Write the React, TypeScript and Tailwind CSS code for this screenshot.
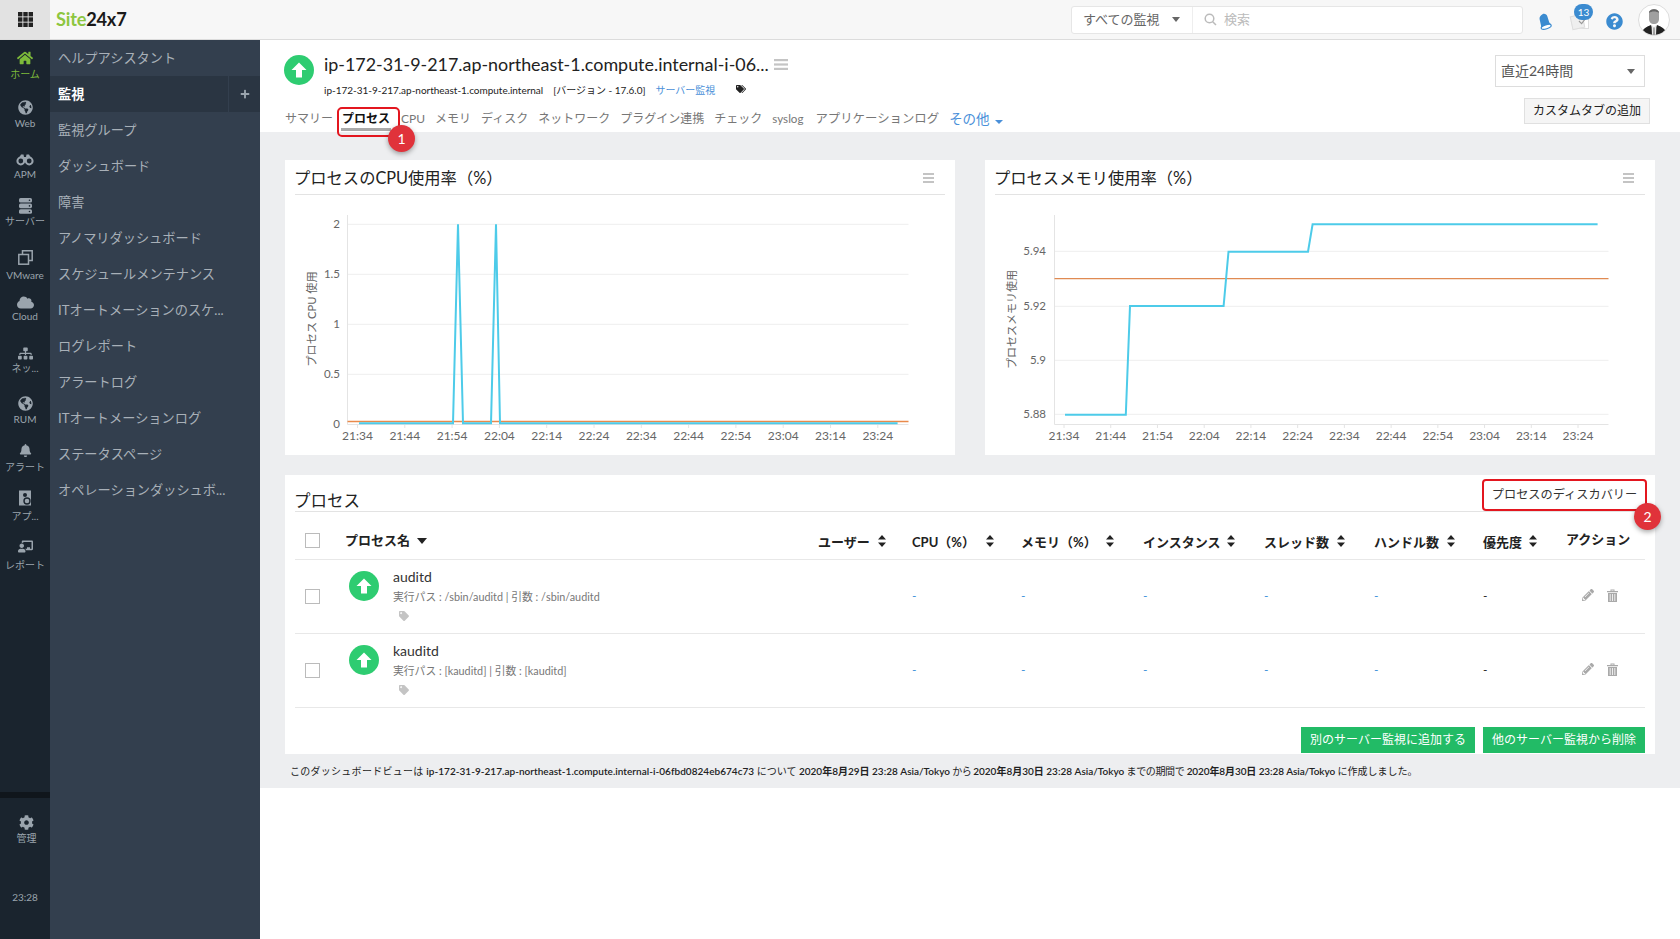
import React from "react";
import {
  FaHome, FaGlobeAmericas, FaCloud, FaSitemap, FaBell, FaCog, FaTags, FaTag, FaPencilAlt, FaChalkboardTeacher, FaQuestionCircle, FaPlus,
} from "react-icons/fa";

const menu = [
  "監視グループ", "ダッシュボード", "障害", "アノマリダッシュボード", "スケジュールメンテナンス", "ITオートメーションのスケ...",
  "ログレポート", "アラートログ", "ITオートメーションログ", "ステータスページ", "オペレーションダッシュボ...",
];

function AppIcon() {
  return (
    <svg width="14" height="16" viewBox="0 0 14 16">
      <rect x="1" y="0.5" width="12" height="15" fill="#9aa4ad" />
      <circle cx="7" cy="5" r="2" fill="#1a242e" />
      <circle cx="9" cy="11" r="3" fill="none" stroke="#1a242e" strokeWidth="1.4" />
    </svg>
  );
}

function Binoc() {
  return (
    <svg width="18" height="13" viewBox="0 0 18 13">
      <path d="M3 5 5 1.5H7.5L8 4H10L10.5 1.5H13L15 5Z" fill="currentColor" />
      <circle cx="4.8" cy="8" r="3.4" fill="none" stroke="currentColor" strokeWidth="2" />
      <circle cx="13.2" cy="8" r="3.4" fill="none" stroke="currentColor" strokeWidth="2" />
      <rect x="7.8" y="5" width="2.4" height="3" fill="currentColor" />
    </svg>
  );
}

function Drums() {
  return (
    <svg width="13" height="16" viewBox="0 0 13 16" fill="currentColor">
      {[0, 5.6, 11.2].map((y) => (
        <g key={y}>
          <rect x="0" y={y} width="13" height="4.6" rx="1.6" />
          <circle cx="10.5" cy={y + 2.3} r="0.8" fill="#1a242e" />
        </g>
      ))}
    </svg>
  );
}

function Squares() {
  return (
    <svg width="15" height="15" viewBox="0 0 15 15" fill="none" stroke="currentColor" strokeWidth="1.5">
      <path d="M4.5 4V.8H14.2V10.5H11" />
      <rect x="0.8" y="4.5" width="9.7" height="9.7" />
    </svg>
  );
}

const rail = [
  { label: "Web", h: "h-[52px]", l: "", icon: <FaGlobeAmericas size={15} /> },
  { label: "APM", h: "h-[47px]", l: "-mt-[1px]", icon: <Binoc /> },
  { label: "サーバー", h: "h-[51px]", l: "-mt-[1px]", icon: <Drums /> },
  { label: "VMware", h: "h-[45px]", l: "mt-[2px]", icon: <Squares /> },
  { label: "Cloud", h: "h-[51px]", l: "-mt-[2px]", icon: <FaCloud size={17} /> },
  { label: "ネッ...", h: "h-[50px]", l: "-mt-[1px]", icon: <FaSitemap size={15} /> },
  { label: "RUM", h: "h-[47px]", l: "", icon: <FaGlobeAmericas size={15} /> },
  { label: "アラート", h: "h-[48px]", l: "mt-[1px]", icon: <FaBell size={13} /> },
  { label: "アプ...", h: "h-[48px]", l: "mt-[2px]", icon: <AppIcon /> },
  { label: "レポート", h: "h-[48px]", l: "mt-[3px]", icon: <FaChalkboardTeacher size={15} /> },
];

function StatusUp() {
  return (
    <svg width="30" height="30" viewBox="0 0 30 30" className="shrink-0">
      <circle cx="15" cy="15" r="15" fill="#2ecc71" />
      <path d="M7.5 15 15 7.5 22.5 15H18V22.5H12V15Z" fill="#fff" />
    </svg>
  );
}

function Burger({ w = 11, h = 10 }: { w?: number; h?: number }) {
  return (
    <svg width={w} height={h} viewBox="0 0 11 10" preserveAspectRatio="none">
      <rect width="11" height="2" fill="#c4c4c4" />
      <rect y="4" width="11" height="2" fill="#c4c4c4" />
      <rect y="8" width="11" height="2" fill="#c4c4c4" />
    </svg>
  );
}

function Sort() {
  return (
    <svg width="8" height="12" viewBox="0 0 8 12" className="shrink-0">
      <path d="M4 0 8 4.5H0ZM0 7.5H8L4 12Z" fill="#222" />
    </svg>
  );
}

function Trash() {
  return (
    <svg width="11" height="13" viewBox="0 0 11 13">
      <path d="M0 2H11V3.2H0ZM3.5 2V.6H7.5V2H6.6V1.4H4.4V2ZM1 4H10V13H1Z" fill="#a9a9a9" />
      <path d="M3.2 5V12M5.5 5V12M7.8 5V12" stroke="#fff" strokeWidth="0.8" />
    </svg>
  );
}

function Annot({ n, className }: { n: string; className: string }) {
  return (
    <span className={"absolute flex h-[27px] w-[27px] items-center justify-center rounded-full bg-[#e0323a] text-[14px] font-normal leading-none text-white shadow-[0_2px_5px_rgba(0,0,0,0.35)] " + className}>
      {n}
    </span>
  );
}

const axis = "'Lato','Noto Sans CJK JP',sans-serif";
const times = ["21:34", "21:44", "21:54", "22:04", "22:14", "22:24", "22:34", "22:44", "22:54", "23:04", "23:14", "23:24"];

function Chart1() {
  const ys: [string, number][] = [["2", 224.3], ["1.5", 274.3], ["1", 324.3], ["0.5", 374.3], ["0", 424]];
  return (
    <svg viewBox="285 195 670 260" className="block h-[260px] w-[670px]" fontFamily={axis}>
      {ys.slice(0, 4).map(([, y]) => <line key={y} x1="347.5" x2="908.5" y1={y} y2={y} stroke="#eeeeee" />)}
      <path d="M347.5 215V424.5H908.5" fill="none" stroke="#e4e4e4" />
      {ys.map(([t, y]) => <text key={t} x="340" y={t === "0" ? 428 : y + 4} textAnchor="end" fontSize="11.5" fill="#666">{t}</text>)}
      {times.map((t, i) => {
        const x = 357.5 + i * 47.3;
        return (
          <g key={t}>
            <line x1={x} x2={x} y1="424" y2="428" stroke="#e4e4e4" />
            <text x={x} y="440" textAnchor="middle" fontSize="12" fill="#666">{t}</text>
          </g>
        );
      })}
      <text transform="translate(316 319) rotate(-90)" textAnchor="middle" fontSize="11.2" fill="#666">プロセス CPU 使用</text>
      <line x1="347.5" x2="908.5" y1="421.5" y2="421.5" stroke="#e98a4b" strokeWidth="1.5" />
      <path d="M359 423.3H453L458 224.3L463 423.3H491L496 224.3L500 423.3H897.6" fill="none" stroke="#4dcbe9" strokeWidth="2" />
    </svg>
  );
}

function Chart2() {
  const ys: [string, number][] = [["5.94", 251.3], ["5.92", 306.3], ["5.9", 360.3], ["5.88", 414.3]];
  return (
    <svg viewBox="985 195 670 260" className="block h-[260px] w-[670px]" fontFamily={axis}>
      {ys.map(([, y]) => <line key={y} x1="1054.5" x2="1608.5" y1={y} y2={y} stroke="#eeeeee" />)}
      <path d="M1054.5 215V424.5H1608.5" fill="none" stroke="#e4e4e4" />
      {ys.map(([t, y]) => <text key={t} x="1046" y={y + 4} textAnchor="end" fontSize="11.5" fill="#666">{t}</text>)}
      {times.map((t, i) => {
        const x = 1064 + i * 46.73;
        return (
          <g key={t}>
            <line x1={x} x2={x} y1="424" y2="428" stroke="#e4e4e4" />
            <text x={x} y="440" textAnchor="middle" fontSize="12" fill="#666">{t}</text>
          </g>
        );
      })}
      <text transform="translate(1016 319.5) rotate(-90)" textAnchor="middle" fontSize="11" fill="#666">プロセスメモリ使用</text>
      <line x1="1054.5" x2="1608.5" y1="278.7" y2="278.7" stroke="#e08a52" strokeWidth="1.2" />
      <path d="M1065 414.7H1125.8L1130 306H1223.6L1228.5 251.7H1308L1312.6 224.3H1597.6" fill="none" stroke="#4dcbe9" strokeWidth="2" />
    </svg>
  );
}

function ChartCard({ title, children }: { title: string; children: React.ReactNode }) {
  return (
    <div className="h-[295px] w-[670px] bg-white">
      <div className="mx-[10px] flex h-[35px] items-center justify-between border-b border-[#e3e3e3] pt-[2px]">
        <span className="-ml-[1px] text-[16.3px] leading-[22px] text-[#222]">{title}</span>
        <span className="mr-[11px] flex"><Burger /></span>
      </div>
      {children}
    </div>
  );
}

const gridCols = "grid grid-cols-[50px_473px_94px_109px_122px_121px_110px_109px_83px_79px]";
const heads = ["ユーザー", "CPU（%）", "メモリ（%）", "インスタンス", "スレッド数", "ハンドル数", "優先度"];
const sortMl = ["ml-[8px]", "ml-[11px]", "ml-[9px]", "ml-[7px]", "ml-[8px]", "ml-[8px]", "ml-[7px]"];

function Row({ name, path }: { name: string; path: string }) {
  return (
    <div className={gridCols + " h-[74px] border-b border-[#e8e8e8]"}>
      <div className="flex items-center pl-[10px]"><span className="h-[15px] w-[15px] border border-[#bbb] bg-white" /></div>
      <div className="flex gap-[14px] pl-[4px] pt-[11px]">
        <StatusUp />
        <div className="flex flex-col">
          <span className="-mt-[3px] text-[14px] leading-[18px] text-[#333]">{name}</span>
          <span className="mt-[2px] text-[10.8px] leading-[18px] text-[#777]">{path}</span>
          <span className="mt-[5px] pl-[6px] text-[#c4c4c4]"><FaTag size={10} /></span>
        </div>
      </div>
      <div />
      {[0, 1, 2, 3, 4].map((i) => (
        <div key={i} className="flex items-center pb-[2px] text-[12px] text-[#3b8fd9]">-</div>
      ))}
      <div className="flex items-center pb-[2px] text-[12px] text-[#222]">-</div>
      <div className="flex items-center gap-[13px] pb-[3px] pl-[16px] text-[#a9a9a9]">
        <FaPencilAlt size={12} />
        <Trash />
      </div>
    </div>
  );
}

export default function App() {
  return (
    <div className="flex h-[939px] w-[1680px] flex-col overflow-hidden bg-white font-['Lato','Noto_Sans_CJK_JP',sans-serif]">
      <header className="flex h-[40px] shrink-0 items-stretch border-b border-[#dcdcdc] bg-[#f7f7f7]">
        <div className="flex w-[50px] items-center justify-center bg-[#e2e2e2]">
          <svg width="15" height="15" viewBox="0 0 15 15" fill="#222">
            {[0, 5.3, 10.6].map((y) => [0, 5.3, 10.6].map((x) => <rect key={x + "-" + y} x={x} y={y} width="4.4" height="4.4" />))}
          </svg>
        </div>
        <div className="ml-[6px] flex items-center text-[18.2px] font-bold tracking-[-0.2px]">
          <span className="text-[#8dc63f]">Site</span>
          <span className="text-[#1a1a1a]">24x7</span>
        </div>
        <div className="ml-auto flex items-center">
          <div className="flex h-[28px] w-[452px] items-center rounded-[3px] border border-[#e6e6e6] bg-white">
            <span className="ml-[11px] w-[78px] text-[13px] leading-none text-[#666]">すべての監視</span>
            <span className="ml-[11px] h-0 w-0 border-x-[4px] border-t-[5px] border-x-transparent border-t-[#666]" />
            <span className="ml-[12px] h-full w-px bg-[#eee]" />
            <svg width="13" height="13" viewBox="0 0 13 13" className="ml-[11px]" fill="none" stroke="#bbb" strokeWidth="1.5">
              <circle cx="5.5" cy="5.5" r="4.3" />
              <path d="M8.7 8.7 12 12" />
            </svg>
            <span className="ml-[7px] text-[13px] leading-none text-[#bbb]">検索</span>
          </div>
          <div className="ml-[14px] mt-[4px]">
            <svg width="17" height="17" viewBox="0 0 17 17" fill="#3b8bd0">
              <path d="M5.5 1.2C7.5.2 9.8 1.4 10.4 3.6L12.2 9.2C12.6 10.2 13.4 10.8 14 11.2L4 14.4C4.2 13.6 4.2 12.6 3.8 11.6L2.6 6.2C2.2 4.2 3.4 2.2 5.5 1.2Z" />
              <ellipse cx="9.2" cy="13.8" rx="5.2" ry="2" fill="#fff" stroke="#3b8bd0" strokeWidth="1.2" transform="rotate(-18 9.2 13.8)" />
            </svg>
          </div>
          <div className="relative ml-[20px] mt-[3px] h-[16px] w-[15px] border border-[#ddd] bg-white">
            <span className="absolute -left-[4px] top-[1px] h-[14px] w-[13px] -rotate-12 border border-[#ddd] bg-[#efefef]" />
            <svg width="9" height="8" viewBox="0 0 10 9" fill="none" stroke="#999" strokeWidth="1.2" className="absolute left-[3px] top-[3px]"><path d="M1 4.5 4 7.5 9 1" /></svg>
            <span className="absolute -left-[1px] -top-[10px] flex h-[16px] w-[19px] items-center justify-center rounded-full bg-[#3b8bd0] text-[10px] leading-none text-white">13</span>
          </div>
          <div className="ml-[17px] mt-[4px] text-[#3b8bd0]"><FaQuestionCircle size={17} /></div>
          <div className="ml-[15px] mr-[10px] h-[32px] w-[32px] overflow-hidden rounded-full border border-[#ddd] bg-white">
            <svg width="30" height="30" viewBox="0 0 30 30">
              <path d="M10 8C10 3 20 3 20 8V14C20 17 18 19 15 19S10 17 10 14Z" fill="#a0a0a0" />
              <path d="M10 8C10 3 20 3 20 8C18 6 12 6 10 8Z" fill="#666" />
              <path d="M2 30C3 24 7 22 12 20L15 26L18 20C23 22 27 24 28 30Z" fill="#222" />
              <path d="M12.5 20 15 22 17.5 20 17 30H13Z" fill="#e8e8e8" />
              <path d="M14.3 22.5H15.7L16 30H14Z" fill="#999" />
            </svg>
          </div>
        </div>
      </header>

      <div className="flex min-h-0 flex-1">
        <nav className="flex w-[50px] shrink-0 flex-col bg-[#1a242e] pt-[8px] text-[#9aa4ad]">
          <div className="flex h-[49px] flex-col items-center text-[#7dba3a]">
            <span className="flex h-[20px] items-center"><FaHome size={16} /></span>
            <span className="whitespace-nowrap text-[10px] leading-[12px]">ホーム</span>
          </div>
          {rail.map((r) => (
            <div key={r.label} className={"flex flex-col items-center " + r.h}>
              <span className="flex h-[20px] items-center">{r.icon}</span>
              <span className={"whitespace-nowrap text-[10px] leading-[12px] " + r.l}>{r.label}</span>
            </div>
          ))}
          <div className="mt-auto border-t-[6px] border-[#10161c] pl-[3px] pt-[14px]">
            <div className="flex flex-col items-center">
              <span className="flex h-[20px] items-center"><FaCog size={15} /></span>
              <span className="text-[10px] leading-[12px]">管理</span>
            </div>
          </div>
          <div className="mb-[36px] mt-[47px] text-center text-[10px] leading-[12px]">23:28</div>
        </nav>

        <aside className="flex w-[210px] shrink-0 flex-col bg-[#333f4e] text-[13.2px] text-[#a8b0b8]">
          <div className="flex h-[36px] items-center pl-[8px] pt-[1px]">ヘルプアシスタント</div>
          <div className="flex h-[36px] items-center bg-[#2a3542] pl-[8px]">
            <span className="flex-1 pt-[1px] font-bold text-white">監視</span>
            <span className="flex h-full w-[32px] items-center justify-center border-l border-[#333f4e] text-[#9aa4ad]"><FaPlus size={10} /></span>
          </div>
          {menu.map((m) => (
            <div key={m} className="flex h-[36px] items-center whitespace-nowrap pl-[8px] pt-[1px]">{m}</div>
          ))}
        </aside>

        <main className="flex min-w-0 flex-1 flex-col">
          <section className="flex h-[92px] shrink-0 justify-between">
            <div className="flex flex-col pl-[24px] pt-[15px]">
              <div className="flex items-start gap-[10px]">
                <StatusUp />
                <div className="flex flex-col">
                  <div className="-mt-[2px] flex items-center">
                    <span className="whitespace-nowrap text-[17.9px] leading-[22px] text-[#222]">ip-172-31-9-217.ap-northeast-1.compute.internal-i-06...</span>
                    <span className="ml-[5px] flex"><Burger w={14} h={11} /></span>
                  </div>
                  <div className="mt-[8px] flex items-center whitespace-nowrap text-[10px] leading-[14px] tracking-[-0.02px] text-[#222]">
                    <span>ip-172-31-9-217.ap-northeast-1.compute.internal</span>
                    <span className="ml-[10px]">[バージョン - 17.6.0]</span>
                    <span className="ml-[10px] text-[#4a90d9]">サーバー監視</span>
                    <span className="ml-[21px] -mt-[3px]"><FaTags size={10} /></span>
                  </div>
                </div>
              </div>
              <div className="mt-[11px] flex h-[23px] items-start gap-[10px] pl-[1px] text-[12px] leading-[22px] text-[#777]">
                <span>サマリー</span>
                <span className="relative -ml-[2px] h-[23px] border-b-[3px] border-[#aaa] px-[1px] font-bold text-[#111]">
                  プロセス
                  <span className="absolute -left-[4px] -top-[1px] h-[30px] w-[63px] rounded-[5px] border-2 border-[#e3161f]" />
                  <Annot n="1" className="left-[47px] top-[17px]" />
                </span>
                <span>CPU</span>
                <span>メモリ</span>
                <span>ディスク</span>
                <span>ネットワーク</span>
                <span>プラグイン連携</span>
                <span>チェック</span>
                <span className="text-[11.6px]">syslog</span>
                <span className="ml-[2px] text-[12.4px]">アプリケーションログ</span>
                <span className="flex items-center text-[13.5px] text-[#4a90d9]">
                  その他
                  <span className="ml-[5px] mt-[5px] h-0 w-0 border-x-[4px] border-t-[4px] border-x-transparent border-t-[#4a90d9]" />
                </span>
              </div>
            </div>
            <div className="flex flex-col items-end pr-[30px] pt-[15px]">
              <div className="mr-[5px] flex h-[32px] w-[150px] items-center justify-between border border-[#ddd] bg-white pl-[5px] pr-[9px] text-[14px] leading-none text-[#555]">
                直近24時間
                <span className="h-0 w-0 border-x-[4px] border-t-[5px] border-x-transparent border-t-[#666]" />
              </div>
              <div className="mt-[11px] flex h-[26px] w-[126px] items-center justify-center border border-[#e0e0e0] bg-[#f5f5f5] text-[12px] leading-none text-[#222]">カスタムタブの追加</div>
            </div>
          </section>

          <section className="h-[656px] shrink-0 bg-[#edeef0] px-[25px] pt-[28px]">
            <div className="flex gap-[30px]">
              <ChartCard title="プロセスのCPU使用率（%）"><Chart1 /></ChartCard>
              <ChartCard title="プロセスメモリ使用率（%）"><Chart2 /></ChartCard>
            </div>

            <div className="mt-[20px] h-[279px] w-[1370px] bg-white px-[10px]">
              <div className="flex h-[37px] items-end justify-between border-b border-[#e3e3e3]">
                <span className="-mb-[2px] -ml-[1px] text-[16.5px] leading-[24px] text-[#222]">プロセス</span>
                <span className="relative -mr-[2px] flex h-[32px] w-[165px] items-center justify-center rounded-[4px] border-2 border-[#e3161f] bg-white text-[12.2px] text-[#333]">
                  プロセスのディスカバリー
                  <Annot n="2" className="left-[150px] top-[22px]" />
                </span>
              </div>
              <div className={gridCols + " h-[48px] border-b border-[#e8e8e8] text-[13px] font-bold text-[#222]"}>
                <div className="flex items-center pl-[10px] pt-[10px]"><span className="h-[15px] w-[15px] border border-[#bbb] bg-white" /></div>
                <div className="flex items-center gap-[7px] pt-[10px]">
                  プロセス名
                  <span className="h-0 w-0 border-x-[5px] border-t-[6px] border-x-transparent border-t-[#222]" />
                </div>
                {heads.map((h, i) => (
                  <div key={h} className="flex items-center whitespace-nowrap pt-[14px]">
                    {h}
                    <span className={sortMl[i] + " -mt-[4px]"}><Sort /></span>
                  </div>
                ))}
                <div className="flex items-center whitespace-nowrap pt-[8px]">アクション</div>
              </div>
              <Row name="auditd" path="実行パス : /sbin/auditd | 引数 : /sbin/auditd" />
              <Row name="kauditd" path="実行パス : [kauditd] | 引数 : [kauditd]" />
              <div className="mt-[19px] flex justify-end gap-[8px] text-[12px] leading-none text-white">
                <span className="flex h-[26px] w-[174px] items-center justify-center bg-[#22bb66]">別のサーバー監視に追加する</span>
                <span className="flex h-[26px] w-[162px] items-center justify-center bg-[#22bb66]">他のサーバー監視から削除</span>
              </div>
            </div>

            <div className="flex h-[34px] items-center whitespace-nowrap pl-[5px] text-[10px] text-[#222]">
              <span className="tracking-[0.27px]">このダッシュボードビューは&nbsp;</span>
              <span className="font-semibold tracking-[0.03px]">ip-172-31-9-217.ap-northeast-1.compute.internal-i-06fbd0824eb674c73</span>
              <span>&nbsp;について&nbsp;</span>
              <span className="font-semibold">2020年8月29日 23:28 Asia/Tokyo</span>
              <span className="tracking-[-0.5px]">&nbsp;から&nbsp;</span>
              <span className="font-semibold">2020年8月30日 23:28 Asia/Tokyo</span>
              <span className="tracking-[-0.35px]">&nbsp;までの期間で&nbsp;</span>
              <span className="font-semibold tracking-[-0.1px]">2020年8月30日 23:28 Asia/Tokyo</span>
              <span>&nbsp;に作成しました。</span>
            </div>
          </section>
        </main>
      </div>
    </div>
  );
}
